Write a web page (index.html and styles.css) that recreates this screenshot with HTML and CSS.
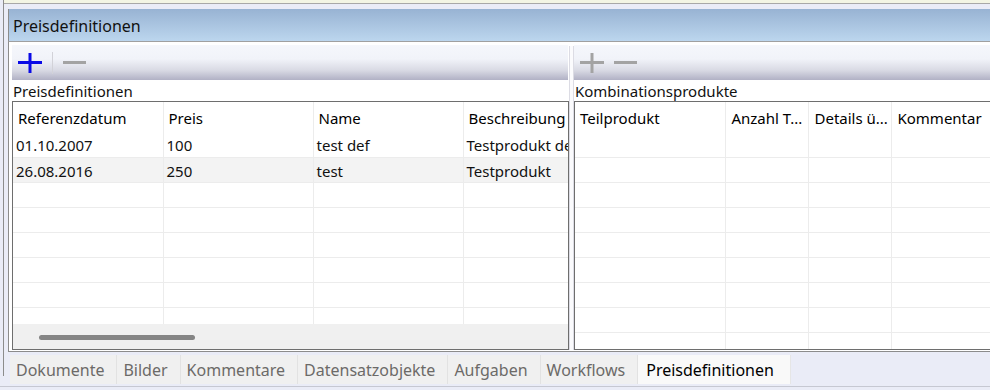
FILE: index.html
```html
<!DOCTYPE html>
<html lang="de">
<head>
    <meta charset="UTF-8">
    <meta name="viewport" content="width=device-width, initial-scale=1.0">
    <title>Preisdefinitionen</title>
    <link rel="stylesheet" href="styles.css">
</head>
<body>
    <div class="window">
        <div class="topstrip"></div>
        <div class="pane">
            <div class="pane-title">Preisdefinitionen</div>
            <div class="pane-body">
                <div class="split">
                    <section class="side side-left">
                        <div class="toolbar">
                            <span class="tool">
                                <svg width="24" height="20" viewBox="0 0 24 20"><path d="M0 9.5H24M12 0V20" stroke="#0a0ae6" stroke-width="3"/></svg>
                            </span>
                            <span class="tool-sep"></span>
                            <span class="tool">
                                <svg width="23" height="20" viewBox="0 0 23 20"><path d="M0 9.5H23" stroke="#a3a3a3" stroke-width="3"/></svg>
                            </span>
                        </div>
                        <div class="caption">Preisdefinitionen</div>
                        <div class="grid">
                            <div class="grid-view">
                                <table class="grid-table cols-left">
                                    <thead>
                                        <tr><th>Referenzdatum</th><th>Preis</th><th>Name</th><th>Beschreibung</th></tr>
                                    </thead>
                                    <tbody>
                                        <tr><td>01.10.2007</td><td>100</td><td>test def</td><td>Testprodukt def</td></tr>
                                        <tr class="alt"><td>26.08.2016</td><td>250</td><td>test</td><td>Testprodukt</td></tr>
                                        <tr><td></td><td></td><td></td><td></td></tr>
                                        <tr><td></td><td></td><td></td><td></td></tr>
                                        <tr><td></td><td></td><td></td><td></td></tr>
                                        <tr><td></td><td></td><td></td><td></td></tr>
                                        <tr><td></td><td></td><td></td><td></td></tr>
                                        <tr><td></td><td></td><td></td><td></td></tr>
                                    </tbody>
                                </table>
                            </div>
                            <div class="hscroll"><div class="thumb"></div></div>
                        </div>
                    </section>
                    <div class="splitter"></div>
                    <section class="side side-right">
                        <div class="toolbar">
                            <span class="tool">
                                <svg width="24" height="20" viewBox="0 0 24 20"><path d="M0 9.5H24M12 0V20" stroke="#a3a3a3" stroke-width="3"/></svg>
                            </span>
                            <span class="tool">
                                <svg width="23" height="20" viewBox="0 0 23 20"><path d="M0 9.5H23" stroke="#a3a3a3" stroke-width="3"/></svg>
                            </span>
                        </div>
                        <div class="caption">Kombinationsprodukte</div>
                        <div class="grid">
                            <div class="grid-view">
                                <table class="grid-table cols-right">
                                    <thead>
                                        <tr><th>Teilprodukt</th><th>Anzahl T...</th><th>Details ü...</th><th>Kommentar</th></tr>
                                    </thead>
                                    <tbody>
                                        <tr><td></td><td></td><td></td><td></td></tr>
                                        <tr><td></td><td></td><td></td><td></td></tr>
                                        <tr><td></td><td></td><td></td><td></td></tr>
                                        <tr><td></td><td></td><td></td><td></td></tr>
                                        <tr><td></td><td></td><td></td><td></td></tr>
                                        <tr><td></td><td></td><td></td><td></td></tr>
                                        <tr><td></td><td></td><td></td><td></td></tr>
                                        <tr><td></td><td></td><td></td><td></td></tr>
                                        <tr><td></td><td></td><td></td><td></td></tr>
                                    </tbody>
                                </table>
                            </div>
                        </div>
                    </section>
                </div>
            </div>
            <div class="tabs">
                <span class="tab">Dokumente</span>
                <span class="tab">Bilder</span>
                <span class="tab">Kommentare</span>
                <span class="tab">Datensatzobjekte</span>
                <span class="tab">Aufgaben</span>
                <span class="tab">Workflows</span>
                <span class="tab tab-active">Preisdefinitionen</span>
            </div>
        </div>
    </div>
    <div class="statusline"></div>
</body>
</html>
```

FILE: styles.css
```css
:root{
    --lavender: #eaecf7;
    --frame: #8c8c8c;
    --gridline: #ececec;
    --ui-font: "Noto Sans", "DejaVu Sans", sans-serif;
}

*{
    box-sizing: border-box;
    margin: 0;
    padding: 0;
}
body{
    width: 990px;
    height: 390px;
    overflow: hidden;
    background-color: var(--lavender);
    font-family: var(--ui-font);
    color: #111;
}
.window{
    margin-left: 3px;
    height: 376px;
    border-left: 1px solid var(--frame);
}
.topstrip{
    height: 4px;
    background-color: #f3f5e4;
    border-bottom: 1px solid #a8a8a8;
}
.pane{
    margin: 5px 0 0 4px;
}
.pane-title{
    height: 33px;
    padding: 2px 0 0 4px;
    line-height: 31px;
    font-size: 16px;
    color: #111;
    background: linear-gradient(#98b3d3, #bcd6ee);
    border-left: 1px solid var(--frame);
    border-bottom: 1px solid #a0a0a0;
}
.pane-body{
    height: 310px;
    padding: 3px 0 1px 3px;
    background-color: #fff;
    border-left: 1px solid var(--frame);
    border-bottom: 1px solid var(--frame);
}
.split{
    display: flex;
    height: 305px;
}
.side{
    display: flex;
    flex-direction: column;
}
.side-left{
    width: 557px;
}
.side-right{
    flex-grow: 1;
    min-width: 0;
}
.splitter{
    width: 5px;
    margin-top: 1px;
    background-color: #fbfbfd;
    border-left: 1px solid #dcdce4;
    border-right: 1px solid #dcdce4;
}
.toolbar{
    height: 35px;
    display: flex;
    align-items: center;
    gap: 10px;
    padding: 0 0 0 6px;
    background: linear-gradient(#f5f7fc 0%, #f1f3f9 40%, #d9dae4 72%, #b1b1c5 100%);
}
.side-left .toolbar{
    margin-right: 1px;
}
.tool{
    display: flex;
    width: 24px;
    height: 20px;
}
.tool-sep{
    width: 1px;
    height: 22px;
    background-color: #d2d2d8;
}
.caption{
    height: 21px;
    padding: 1px 0 0 1px;
    line-height: 20px;
    font-size: 15px;
    color: #111;
}
.grid{
    height: 249px;
    display: flex;
    flex-direction: column;
    border: 1px solid #6e6e6e;
    overflow: hidden;
}
.side-right .grid{
    border-right: none;
}
.grid-view{
    flex-grow: 1;
    overflow: hidden;
}
.grid-table{
    table-layout: fixed;
    border-collapse: collapse;
    font-size: 15px;
}
.cols-left{
    width: 555px;
}
.cols-right{
    width: 420px;
}
.grid-table th,
.grid-table td{
    white-space: nowrap;
    overflow: hidden;
    text-align: left;
    font-weight: normal;
    border-right: 1px solid var(--gridline);
}
.grid-table th{
    height: 30px;
    padding: 1px 5px 0 5px;
    color: #000;
}
.grid-table td{
    height: 25px;
    padding: 2px 5px 0 3px;
    border-bottom: 1px solid var(--gridline);
}
.cols-left th:nth-child(-n+3),
.cols-left td:nth-child(-n+3){
    width: 150px;
}
.cols-left th:last-child,
.cols-left td:last-child{
    border-right: none;
}
.cols-right th:nth-child(1){ width: 151px; }
.cols-right th:nth-child(2),
.cols-right th:nth-child(3){ width: 83px; }
.grid-table tr.alt td{
    background-color: #f3f3f3;
}
.hscroll{
    height: 25px;
    flex-shrink: 0;
    padding: 11px 0 0 26px;
    background-color: #f0f0f0;
}
.thumb{
    width: 156px;
    height: 5px;
    border-radius: 3px;
    background-color: #858585;
}
.tabs{
    display: flex;
    margin: 3px 0 0 2px;
    height: 29px;
}
.tab{
    display: flex;
    align-items: center;
    padding: 0 12px 0 6px;
    font-size: 16px;
    color: #6c6a68;
    background-color: #f0f0f0;
    border-right: 1px solid #e2e2e2;
}
.tab-active{
    color: #000;
    background-color: #f9f9f9;
    border-right: 1px solid #e6e6e6;
    padding: 0 16px 0 8px;
}
.statusline{
    margin-top: 10px;
    border-top: 1px solid #c6c8d2;
}
```
